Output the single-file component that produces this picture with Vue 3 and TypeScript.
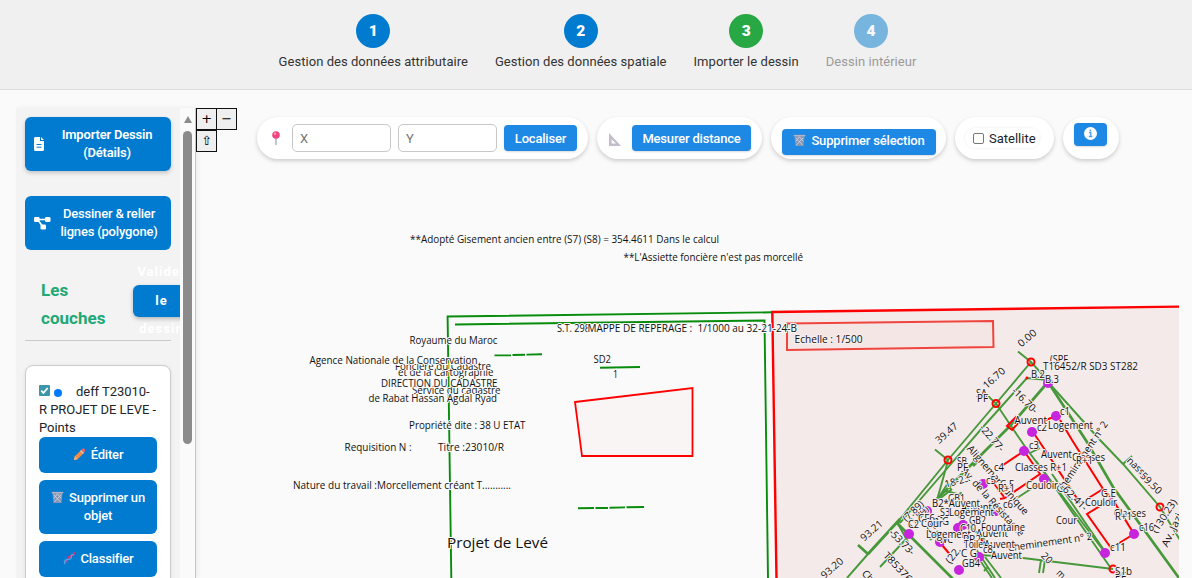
<script setup lang="ts">
interface Step { n: number; label: string; tone: string }
interface Label { t: string; x: number; y: number; w: number; a: number; s: number }

const steps: Step[] = [
  { n: 1, label: 'Gestion des données attributaire', tone: 'blue' },
  { n: 2, label: 'Gestion des données spatiale', tone: 'blue' },
  { n: 3, label: 'Importer le dessin', tone: 'green' },
  { n: 4, label: 'Dessin intérieur', tone: 'off' },
]

// Horizontal label: left edge, right edge, baseline
const h = (t: string, l: number, r: number, b: number, s = 10.1): Label =>
  ({ t, x: (l + r) / 2, y: b - s * 0.35, w: r - l, a: 0, s })
// Rotated label: centre, length, angle
const r = (t: string, x: number, y: number, w: number, a: number): Label => ({ t, x, y, w, a, s: 10.1 })

const labels: Label[] = [
  h("**L'Assiette foncière n'est pas morcellé", 623.5, 803, 261),
  h('**Adopté Gisement ancien entre (S7) (S8) = 354.4611 Dans le calcul', 410, 719, 243),
  h('Royaume du Maroc', 409.5, 497.5, 344),
  h('et de la Cartographie', 398, 493.5, 376.3),
  h('Foncière du Cadastre', 395, 491, 370.3),
  h('Agence Nationale de la Conservation', 309.5, 477.5, 364.3),
  h('Service du cadastre', 412, 500.5, 394.3),
  h('DIRECTION DU CADASTRE', 381, 497.5, 387),
  h('de Rabat Hassan Agdal Ryad', 368.5, 497, 402.3),
  h('Propriété dite : 38 U ETAT', 409, 525.5, 429),
  h('Requisition N :', 344.5, 411.5, 451),
  h('Titre :23010/R', 438, 504, 451),
  h('Nature du travail :Morcellement créant T...........', 293, 511, 489),
  h('Projet de Levé', 447, 548, 548, 15),
  h('S.T. 298', 557, 590, 332),
  h('MAPPE DE REPERAGE :  1/1000 au 32-21-24-B', 587.5, 797, 332),
  h('SD2', 593.5, 611, 363),
  h('1', 613, 618, 378),
  h('Echelle : 1/500', 794.5, 862.5, 343),
  r('0.00', 1027, 338, 21, -40),
  r('16.70', 994, 378, 26, -42),
  r('39.47', 946.5, 433, 26, -41),
  r('93.21', 871.5, 530.5, 26, -41),
  r('93.20', 832, 568, 26, -41),
  r('-16.70-', 1025, 400.5, 32, 45),
  r('-22.77-', 992, 438, 32, 49),
  r('18-23', 957, 481, 25, -15),
  r('Alignement unique', 998, 480, 88, 49),
  r('Av. de la Résistance', 993, 502, 88, 48),
  r('Cheminement n° 2', 1082, 457, 84, -56),
  r('-62.41-', 1074, 497, 34, 45),
  r('Cheminement n° 2', 1050, 542, 85, -8),
  r('(1.89)', 918, 516, 25, -45),
  r('(7.89)', 913, 511, 25, -45),
  r('(18)', 935, 524, 20, -45),
  r('-53.73-', 902, 542, 32, 45),
  r('T85376', 898, 567, 37, 47),
  r('Ch', 868, 576, 12, 45),
  r('(22.', 953, 555, 18, -52),
  r('20', 1047, 558, 11, 45),
  r('m', 1061, 574, 8, 45),
  r('nasse', 1138, 468, 26, 45),
  r('-59.50', 1150, 482, 29, 45),
  r('(130.23)', 1164, 516, 38, -57),
  r('Av. Jazi', 1172, 530, 36, -65),
  h('(SPF', 1050, 1068, 363),
  h('T16452/R SD3 ST282', 1043, 1138, 370),
  h('B.2', 1031, 1045, 378),
  h('B.3', 1045, 1059, 383),
  h('c1', 1060, 1070, 414.5),
  h('c2', 1037, 1047, 430.5),
  h('Auvent', 1014.5, 1047, 424),
  h('Logement', 1048, 1093, 429),
  h('c3', 1029, 1039, 448.5),
  h('SA', 976, 987, 397),
  h('PF', 977, 988, 402),
  h('SB', 957, 967, 465),
  h('PF', 957, 968, 471),
  h('Classes', 1072, 1105, 461),
  h('Auvent', 1041, 1072, 458),
  h('R+1', 1076, 1093, 464),
  h('Classes R+1', 1015, 1067, 471),
  h('c4', 994, 1004, 471),
  h('G.E', 1000, 1014, 488),
  h('c5', 986, 996, 484),
  h('R+1', 998, 1015, 492),
  h('Couloir', 1026, 1058, 489),
  h('c6', 1003, 1013, 508),
  h('G.E', 1101, 1116, 497),
  h('Couloir', 1085, 1117, 506),
  h('Classes', 1114, 1146, 517),
  h('R+1', 1115, 1132, 520),
  h('Cour', 1056, 1077, 524),
  h('c16', 1139, 1154, 531),
  h('c11', 1110, 1126, 551),
  h('GB1', 948, 965, 502),
  h('Auvent', 961, 992, 511),
  h('S3', 940, 950, 516),
  h('B2*Auvent', 932, 980, 507),
  h('Logement', 949, 994, 516),
  h('GB2', 969, 986, 524),
  h('CF6', 918, 935, 522),
  h('G', 942, 949, 525),
  h('C2', 908, 919, 528),
  h('Cour', 921, 943, 527),
  h('C10', 960, 976, 532),
  h('Auvent', 976, 1008, 537),
  h('Fountaine', 981, 1025, 531),
  h('WC', 939, 953, 543),
  h('Logement', 926, 971, 538),
  h('PP2', 963, 981, 543),
  h('Toilet', 964, 986, 548),
  h('Auvent', 984, 1015, 548),
  h('C G', 961, 977, 557),
  h('c8', 983, 993, 553),
  h('Auvent', 991, 1022, 559),
  h('GB4', 962, 980, 567),
  h('PF', 1115, 1126, 580),
  h('S1b', 1115, 1132, 575),
]

const greenLines: string[] = [
  'M1018 351.500L1031 362L1050 383', 'M1031 362L996 403.500L948 460L900 519L868 554L847 578',
  'M1026 378L1048 380', 'M1027 378L983 427L944 472L900 523',
  'M988 396L996 403.500L1011 426L1026 448L1052 483L1110 567', 'M1036 461L1103 550', 'M1052 474L1108 556',
  'M1048 382L1100 440L1123 464L1160 507L1180 540', 'M1123 464L1132 456',
  'M935 449.500L948 460L946 468L937 500', 'M937 500L948 483L951 490L938 500L952 489', 'M943 490L957 494',
  'M880 567L907 538', 'M900 520L898 524L908 542',
  'M980 555L1023 558L1113 569', 'M1041 560L1039 573', 'M1045 560L1043 573',
  'M970 540L995 578', 'M985 557L1001 578', 'M981 562L992 578', 'M988 567L984 571',
  'M1017 498L1040 483', 'M1030 453L1040 448', 'M955 513L985 540', 'M938 531L930 540',
]
const greenBold: string[] = [
  'M1048 382L1012 424L973 463L937 499', 'M1048 382L1087 442L1113 487L1179 578',
  'M896 522L953 579', 'M858 545L868 554', 'M900 519L868 554', 'M958 495L962 493', 'M973 466L979 460',
]
const redLines: string[] = [
  'M1007 426L1016 417L1020 421L1012 430Z', 'M1056 416L1046 420', 'M1060 420L1072 440L1103 489L1087 499M1103 489L1113 500L1134 534L1111 548L1087 514L1113 498',
  'M1035 435L1045 450L1080 503', 'M1024 451L1000 467', 'M1024 451L1040 474L1005 498M1004 497L990 478', 'M1000 499L1005 498',
  'M942 545L952 557', 'M978 532L983 543', 'M970 562L978 557',
]
const points: [number, number][] = [
  [1048, 383], [1056, 416], [1032, 432], [1024, 451], [1044, 479], [1134, 534], [1105, 553],
  [983, 484], [996, 511], [927, 511], [909, 534], [940, 542], [963, 525], [958, 528], [979, 557], [959, 570],
]
const stations: [number, number][] = [[1031, 362], [996, 403.5], [948, 460], [1160, 507], [1113, 569]]
</script>

<template>
  <div class="page">
    <header class="steps">
      <div v-for="s in steps" :key="s.n" class="step" :class="s.tone">
        <span class="num">{{ s.n }}</span><span class="lab">{{ s.label }}</span>
      </div>
    </header>

    <main class="body">
      <aside class="side">
        <div class="content">
          <button class="big first">
            <svg class="i-file" viewBox="0 0 10 14"><path d="M1.500 0H6v4h4v8.500a1.500 1.500 0 0 1-1.500 1.500h-7A1.500 1.500 0 0 1 0 12.500v-11A1.500 1.500 0 0 1 1.500 0Z" fill="#fff" /><path d="M7 0l3 3H7Z" fill="#fff" /><path d="M2.500 7.500h5M2.500 10.200h5" stroke="#0879d0" /></svg>
            <span>Importer Dessin<br>(Détails)</span>
          </button>
          <button class="big second">
            <svg class="i-dia" viewBox="0 0 17 14"><path d="M3 3.500h11M4 4l5 7" stroke="#fff" stroke-width="1.600" /><rect x="0" y="1" width="5.500" height="5" rx="1.200" fill="#fff" /><rect x="11" y="1" width="5.500" height="5" rx="1.200" fill="#fff" /><rect x="6.500" y="8.500" width="5.500" height="5" rx="1.200" fill="#fff" /></svg>
            <span>Dessiner &amp; relier<br>lignes (polygone)</span>
          </button>
          <div class="heading">
            <h3>Les<br>couches</h3>
            <button class="validate"><span>Valider<br>le<br>dessin</span></button>
          </div>
          <section class="layer">
            <p><span class="check"><svg viewBox="0 0 11 11"><path d="M2.200 5.700l2.200 2.200 4.300-4.900" fill="none" stroke="#fff" stroke-width="1.700" /></svg></span><i class="dot"></i>deff T23010-<br>R PROJET DE LEVE -<br>Points</p>
            <button>
              <svg class="emo" viewBox="0 0 14 14"><path d="M1 13l1-4L9 2l3 3-7 7Z" fill="#f58a45" /><path d="M2 9l3 3-4 1Z" fill="#e9b98f" /><path d="M9 2l1.500-1.500q1-.5 2 .5t.5 2L12 5Z" fill="#ee5d68" /><path d="M8.200 2.800l3 3" stroke="#c7d8e2" stroke-width="1.200" /></svg>Éditer
            </button>
            <button>
              <svg class="emo" viewBox="0 0 14 14"><path d="M1.500 2h11l-1.300 11H2.800Z" fill="#8297b5" /><path d="M3 4l7.500 8M7 3l4 5M11 4l-7.500 8M7 3L3 8" stroke="#d8d4e3" stroke-width=".9" /><path d="M.8 1.700h12.400" stroke="#b9b4c4" stroke-width="1.500" /></svg>Supprimer un objet
            </button>
            <button>
              <svg class="emo" viewBox="0 0 14 14"><path d="M1 10q4 2 5-2t4-4 3-4" fill="none" stroke="#e32d6c" stroke-width="1.800" /><path d="M3 13q-1-5 3-5t4-3 3-2" fill="none" stroke="#49a6ea" stroke-width="1.500" /><path d="M4 9l2 2M8 5l2 2M10 2l2 2" stroke="#9b6ac2" /></svg>Classifier
            </button>
          </section>
        </div>
        <div class="scroll"><i class="up"></i><i class="thumb"></i></div>
      </aside>

      <section class="map">
        <svg class="plan" viewBox="196 108 983 470" width="983" height="470">
          <path d="M772 312L1180 306V579H776Z" fill="#f5eaea" />
          <path d="M787 323.500L993 321L993.500 347L787 350Z" fill="#f5e6e6" stroke="#f0443e" stroke-width="2" />
          <path d="M575 402L692.500 388V456H582Z" fill="#f9f5f5" stroke="#f00" stroke-width="1.800" />
          <g class="frame">
            <path d="M451.300 578L447.600 316.500L772 312.300" />
            <path d="M455 324.500L764.500 320.500L768 578" />
            <path d="M494.500 355.400H511M512.500 355L525 354.700M526.500 354.600L542 354.300" />
            <path d="M578 508.300L594 508M595.500 508H608M609.500 507.700L625 507.400M626.500 507.300L644 507M600 367.800L640 367" />
          </g>
          <path d="M776.500 579L772.300 312L1180 306.600" fill="none" stroke="#f00" stroke-width="2.400" />
          <path v-for="d in greenLines" :key="d" class="g1" :d="d" />
          <path v-for="d in greenBold" :key="d" class="g2" :d="d" />
          <path v-for="d in redLines" :key="d" class="red" :d="d" />
          <circle v-for="(p, i) in points" :key="'p' + i" :cx="p[0]" :cy="p[1]" r="5" fill="#c724dd" />
          <circle v-for="(p, i) in stations" :key="'s' + i" :cx="p[0]" :cy="p[1]" r="3.500" fill="none" stroke="#f00" stroke-width="2" />
          <circle cx="1027" cy="378" r="1.400" fill="#f00" />
          <text
            v-for="(l, i) in labels" :key="'t' + i" class="txt" :class="{ tinted: l.x > 776 && l.y > 305 }"
            :transform="`translate(${l.x} ${l.y}) rotate(${l.a})`" :y="l.s * 0.35" :font-size="l.s"
            :textLength="l.w" lengthAdjust="spacingAndGlyphs"
          >{{ l.t }}</text>
        </svg>

        <div class="zoom"><button>+</button><button>−</button><button>⇧</button></div>

        <div class="tools">
          <div class="pill p1">
            <svg class="pin" viewBox="0 0 8 14"><path d="M4 7v7" stroke="#8499a8" stroke-width="1.100" /><circle cx="4" cy="4" r="3.800" fill="#f0457e" /><circle cx="3" cy="2.800" r="1.200" fill="#ff9dbd" /></svg>
            <input placeholder="X"><input placeholder="Y"><button>Localiser</button>
          </div>
          <div class="pill p2">
            <svg class="ruler" viewBox="0 0 13 13"><path d="M1 0v13h12Zm2.600 6.200L8 10.500H3.600Z" fill="#c3bccb" fill-rule="evenodd" /></svg>
            <button>Mesurer distance</button>
          </div>
          <div class="pill p3">
            <button><svg class="emo" viewBox="0 0 14 14"><path d="M1.500 2h11l-1.300 11H2.800Z" fill="#8297b5" /><path d="M3 4l7.500 8M7 3l4 5M11 4l-7.500 8M7 3L3 8" stroke="#d8d4e3" stroke-width=".9" /><path d="M.8 1.700h12.400" stroke="#b9b4c4" stroke-width="1.500" /></svg>Supprimer sélection</button>
          </div>
          <div class="pill p4"><label><i class="box"></i>Satellite</label></div>
          <div class="pill p5">
            <button aria-label="Info"><svg width="13" height="13" viewBox="0 0 13 13"><circle cx="6.500" cy="6.500" r="6.500" fill="#fff" /><path d="M5 5.500h1.800v4M4.800 9.500h3.500" fill="none" stroke="#4a9fe9" stroke-width="1.300" /><circle cx="6.400" cy="3.400" r=".9" fill="#4a9fe9" /></svg></button>
          </div>
        </div>
      </section>
    </main>
  </div>
</template>

<style>
body { margin: 0; background: #fafafa; overflow: hidden; }
</style>

<style scoped>
* { box-sizing: border-box; }
.page { width: 1192px; height: 578px; overflow: hidden; background: #fafafa; font-family: Roboto, sans-serif; font-size: 13px; color: #212529; }
button { font-family: inherit; border: 0; color: #fff; padding: 0; letter-spacing: -.19px; }
.steps { height: 90px; background: #f0f0f0; border-bottom: 1px solid #dcdcdc; display: flex; justify-content: center; gap: 27px; padding: 14px 0 0 3px; }
.step { display: flex; flex-direction: column; align-items: center; white-space: nowrap; }
.num { width: 34px; height: 34px; border-radius: 50%; background: #007bd0; color: #fff; font-weight: 900; font-size: 15.5px; display: flex; align-items: center; justify-content: center; }
.green .num { background: #28a745; }
.off { opacity: .5; }
.lab { font-size: 13px; letter-spacing: .045px; line-height: 18px; margin-top: 5px; color: #333; }
.off .lab { color: #444; }
.body { display: flex; padding: 18px 0 0 16px; height: 488px; }
.side { width: 180px; height: 470px; display: flex; background: #fafafa; border-right: 1px solid #c6c6c6; box-shadow: 2px 0 5px rgba(0,0,0,.06); flex: none; }
.content { width: 164px; height: 470px; padding: 9px; background: #f3f3f3; overflow: hidden; flex: none; }
.scroll { flex: 1; display: flex; flex-direction: column; align-items: center; padding-top: 8px; }
.up { border: 4.5px solid transparent; border-top: 0; border-bottom: 7px solid #8b8b8b; }
.thumb { width: 9px; height: 313px; margin-top: 8px; border-radius: 5px; background: #8b8b8b; }
.big { display: flex; width: 146px; height: 54px; border-radius: 6px; background: #007bd0; align-items: center; font-size: 13px; line-height: 18px; font-weight: 500; }
.big span { flex: 1; text-align: center; }
.first { padding: 0 9px; box-shadow: 0 2px 4px rgba(0,0,0,.2); font-weight: 600; }
.first span { padding-left: 8px; }
.second { margin-top: 25px; padding: 0 9px; }
.second span { padding-left: 5px; white-space: nowrap; }
.i-file { width: 10px; height: 14px; flex: none; }
.i-dia { width: 17px; height: 14px; flex: none; }
.heading { display: flex; align-items: center; height: 91px; border-bottom: 1px solid #c9c9c9; padding: 17px 0 0 16px; }
h3 { margin: 0; width: 92px; flex: none; font-size: 17px; line-height: 28px; font-weight: 700; color: #20a876; letter-spacing: .05px; }
.validate { flex: none; width: 57px; height: 32px; border-radius: 6px; background: #007bd0; box-shadow: 0 2px 4px rgba(0,0,0,.25); font-size: 13px; font-weight: 700; letter-spacing: 1px; line-height: 28.500px; display: flex; align-items: center; justify-content: center; margin-top: -5px; }
.layer { margin-top: 24px; height: 260px; border: 1px solid #ccc; border-radius: 8px; background: #fff; padding: 17px 13px 0; box-shadow: 0 1px 4px rgba(0,0,0,.08); display: flex; flex-direction: column; }
.layer p { margin: 0; line-height: 18px; white-space: nowrap; letter-spacing: -.04px; }
.check { display: inline-block; width: 11px; height: 11px; background: #3b95ab; border-radius: 1px; line-height: 0; vertical-align: 0; }
.check svg { width: 11px; height: 11px; }
.dot { display: inline-block; width: 8px; height: 8px; border-radius: 50%; background: #007bff; margin: 0 14px -1px 4px; }
.layer button { width: 118px; min-height: 36px; padding: 9px 5px; margin-bottom: 7px; border-radius: 6px; background: #007bd0; font-size: 13px; line-height: 18px; font-weight: 500; flex: none; }
.emo { width: 13px; height: 13px; margin-right: 5px; vertical-align: -2px; }
.map { position: relative; width: 983px; height: 470px; }
.plan { position: absolute; left: 0; top: 0; }
.frame path { fill: none; stroke: #078c0c; stroke-width: 1.9; }
.g1 { fill: none; stroke: #46983a; stroke-width: 1.9; }
.g2 { fill: none; stroke: #46983a; stroke-width: 2.7; }
.red { fill: none; stroke: #f00; stroke-width: 2; }
.txt { font-family: "Open Sans", "Noto Sans", sans-serif; text-anchor: middle; fill: #111; stroke: #fafafa; stroke-width: 2px; paint-order: stroke; white-space: pre; }
.tinted { stroke: #f7eeee; }
.zoom { position: absolute; left: 0; top: 0; width: 42px; display: flex; flex-wrap: wrap; }
.zoom button { width: 21px; height: 22px; border: 1px solid #111; background: #efefef; color: #000; font: 13px "DejaVu Sans", sans-serif; margin-right: -1px; line-height: 18px; }
.zoom button:nth-child(2) { margin-right: 1px; }
.tools { position: absolute; left: 61px; top: 9px; display: flex; gap: 9px; }
.pill { height: 42px; border-radius: 21px; background: #fff; box-shadow: 0 2px 4px rgba(0,0,0,.18); display: flex; align-items: center; flex: none; }
.pill button { height: 26px; border-radius: 4px; background: #1e88e5; font-size: 13px; font-weight: 500; box-shadow: 0 1px 2px rgba(0,0,0,.15); white-space: nowrap; }
.p1 { width: 331px; padding-left: 15px; }
.pin { width: 8px; height: 14px; margin-right: 12px; }
input { width: 99px; height: 28px; border: 1px solid #c8c8c8; border-radius: 5px; padding: 0 7px; margin: 0 7px 0 0; background: #fff; font: 13px Roboto, sans-serif; }
input::placeholder { color: #757575; }
.p1 button { width: 73px; }
.p2 { width: 165px; padding-left: 11px; }
.ruler { width: 13px; height: 13px; margin: 2px 11px 0 0; }
.p2 button { width: 119px; }
.p3 { width: 175px; padding: 8px 0 0 11px; }
.p3 button { width: 154px; }
.p3 button { line-height: 24px; padding-bottom: 2px; }
.p4 { width: 99px; padding-left: 10px; }
.p4 label { width: 75px; height: 20px; border-radius: 10px; padding-left: 8px; display: flex; align-items: center; gap: 5px; box-shadow: 0 0 3px rgba(0,0,0,.08); white-space: nowrap; }
.box { width: 11px; height: 11px; border: 1px solid #767676; border-radius: 2px; flex: none; }
.p5 { width: 56px; padding: 0 0 7px 11px; }
.p5 button { width: 33px; height: 23px; line-height: 0; padding-bottom: 2px; }
</style>
